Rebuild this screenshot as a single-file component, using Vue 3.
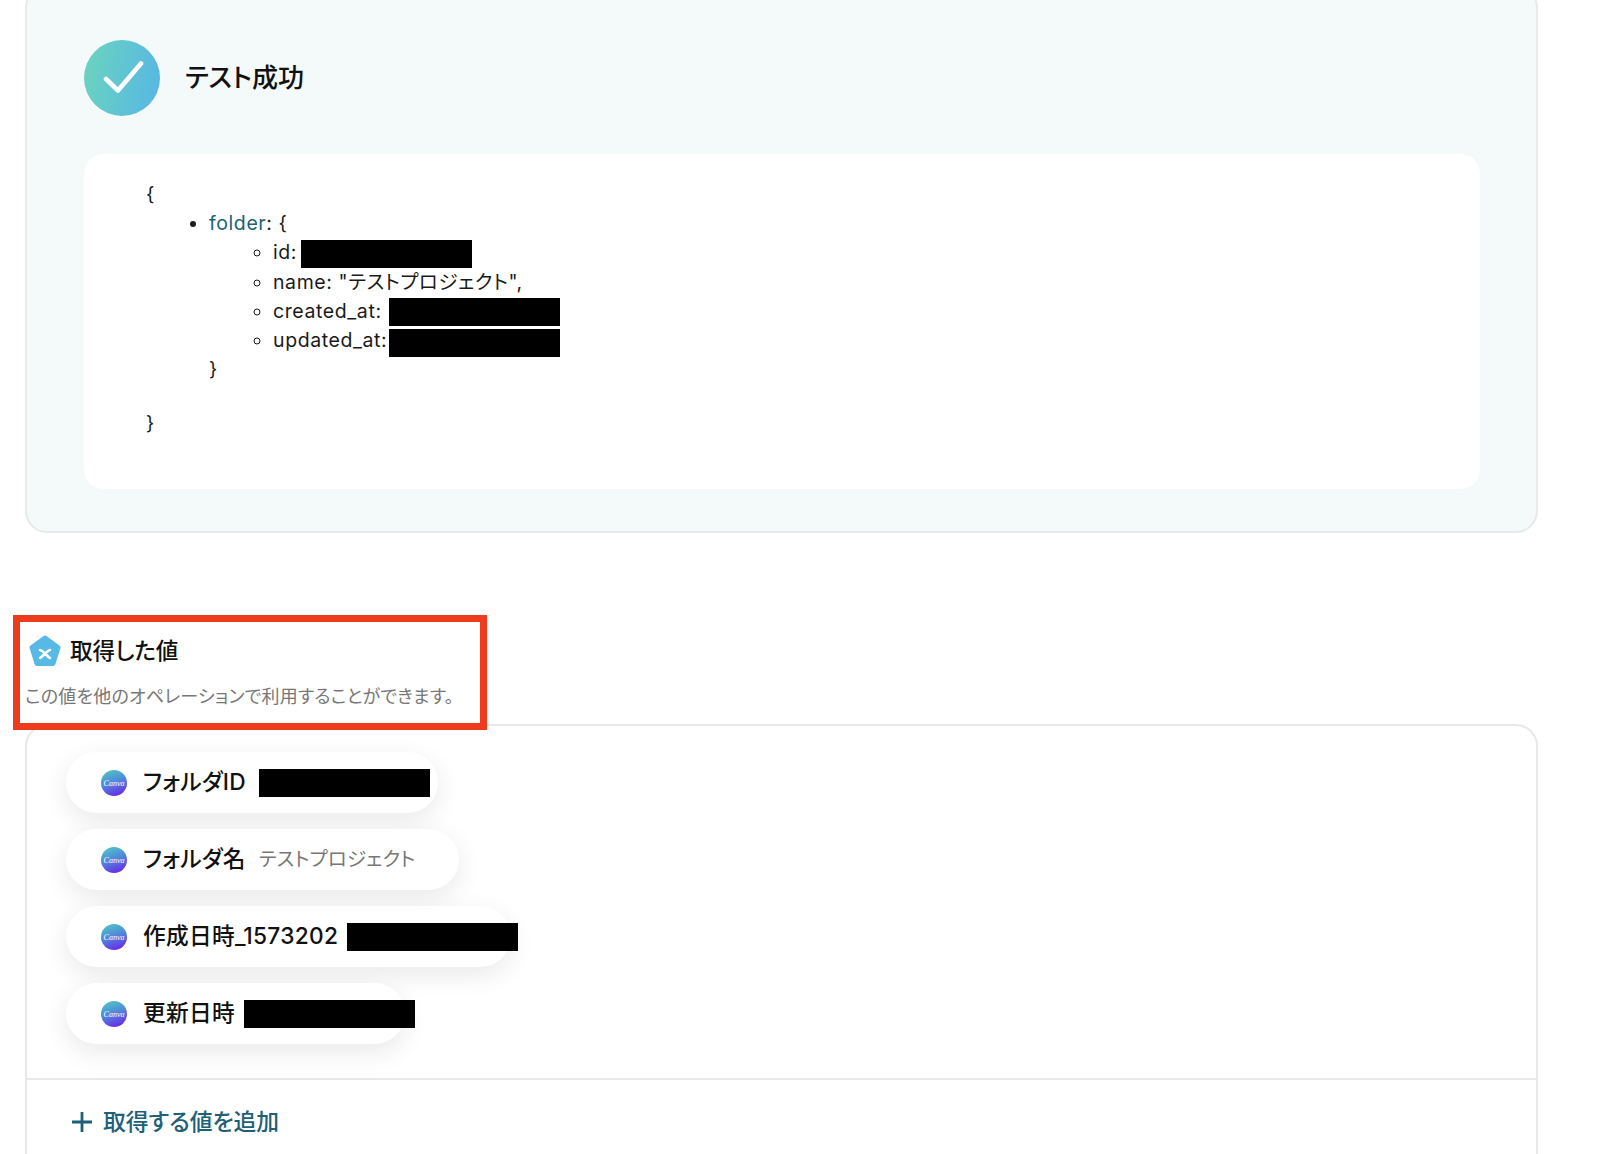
<script setup>
const pills = [
  { label: 'フォルダID', width: 372, gap: 13, mask: true },
  { label: 'フォルダ名', width: 393, gap: 13, value: 'テストプロジェクト' },
  { label: '作成日時_1573202', width: 445, gap: 9, mask: true },
  { label: '更新日時', width: 339, gap: 9, mask: true }
]
</script>

<template>
  <div class="page">
    <section class="result">
      <header class="result-head">
        <span class="check">
          <svg width="44" height="44" viewBox="0 0 44 44" fill="none">
            <path d="M6 23 L18 34.5 L41 7.5" stroke="#fff" stroke-width="4.6" stroke-linecap="round" stroke-linejoin="round" />
          </svg>
        </span>
        <h2 class="result-title">テスト成功</h2>
      </header>
      <div class="json">
        <div>{</div>
        <ul class="outer">
          <li>
            <span class="key">folder</span>: {
            <ul class="inner">
              <li>id: <span class="mask mask-id"></span></li>
              <li>name: "テストプロジェクト",</li>
              <li>created_at: "<span class="mask mask-created"></span></li>
              <li>updated_at: <span class="mask mask-updated"></span></li>
            </ul>
            <div>}</div>
          </li>
        </ul>
        <div class="close">}</div>
      </div>
    </section>

    <section class="values">
      <div class="values-head">
        <div class="values-title-row">
          <svg class="penta" width="32" height="32" viewBox="0 0 32 32">
            <polygon points="16,3 29,12.5 24,28.5 8,28.5 3,12.5" fill="#56b9e6" stroke="#56b9e6" stroke-width="5" stroke-linejoin="round" />
            <path d="M11 15 C14 15.5 18 21.5 21 23 M21 15 C18 15.5 14 21.5 11 23" fill="none" stroke="#fff" stroke-width="2.6" stroke-linecap="round" />
          </svg>
          <h3 class="values-title">取得した値</h3>
        </div>
        <p class="values-desc">この値を他のオペレーションで利用することができます。</p>
      </div>

      <div class="values-card">
        <div class="pill-list">
          <div v-for="pill in pills" :key="pill.label" class="pill" :style="{ width: pill.width + 'px' }">
            <svg class="canva" width="26" height="26" viewBox="0 0 26 26">
              <defs>
                <linearGradient :id="'cv' + pill.width" x1="0.25" y1="0" x2="0.6" y2="1">
                  <stop offset="0" stop-color="#50c4c4" />
                  <stop offset="0.5" stop-color="#4f86dc" />
                  <stop offset="1" stop-color="#6a2be8" />
                </linearGradient>
              </defs>
              <circle cx="13" cy="13" r="13" :fill="'url(#cv' + pill.width + ')'" />
              <text x="13" y="16" text-anchor="middle" class="canva-text">Canva</text>
            </svg>
            <span class="pill-label">{{ pill.label }}</span>
            <span v-if="pill.value" class="pill-value" :style="{ marginLeft: pill.gap + 'px' }">{{ pill.value }}</span>
            <span v-if="pill.mask" class="pill-mask" :style="{ marginLeft: pill.gap + 'px' }"></span>
          </div>
        </div>
        <div class="add-row">
          <svg width="22" height="22" viewBox="0 0 22 22">
            <path d="M11 1 V21 M1 11 H21" stroke="#1d6078" stroke-width="2.8" fill="none" />
          </svg>
          <span class="add-label">取得する値を追加</span>
        </div>
      </div>
    </section>
  </div>
</template>

<style>
html, body { margin: 0; background: #fff; }
</style>

<style scoped>
.page {
  height: 1154px;
  overflow: hidden;
  background: #fff;
  font-family: Inter, "Noto Sans CJK JP", sans-serif;
  font-feature-settings: "palt";
  color: #1a1a1a;
}
.result {
  box-sizing: border-box;
  width: 1513px;
  height: 547px;
  margin: -14px 0 0 25px;
  padding: 51px 56px 0 57px;
  background: #f4f9f9;
  border: 2px solid #e6eaea;
  border-radius: 22px;
}
.result-head {
  display: flex;
  align-items: center;
  gap: 25px;
  height: 77px;
}
.check {
  display: flex;
  align-items: center;
  justify-content: center;
  width: 76px;
  height: 76px;
  border-radius: 50%;
  background: linear-gradient(100deg, #6cd4bd, #56b6e6);
}
.result-title {
  margin: -4px 0 0;
  font-size: 26px;
  font-weight: 500;
  color: #111;
}
.json {
  box-sizing: border-box;
  height: 335px;
  margin-top: 38px;
  padding: 26px 62px;
  background: #fff;
  border-radius: 20px;
  font-size: 19.5px;
  line-height: 29.2px;
  letter-spacing: 0.6px;
}
.outer, .inner {
  margin: 0;
  padding-left: 63px;
}
.inner { padding-left: 64px; }
.key { color: #1d6078; }
.close { margin-top: 25px; }
.mask {
  display: inline-block;
  vertical-align: top;
  width: 171px;
  height: 28px;
  background: #000;
}
.mask-id { margin: 1.6px 0 -1.6px -2px; }
.mask-created { margin: 1.2px 0 -1.2px -8px; }
.mask-updated { margin: 3px 0 -3px -4px; }
.values { margin-top: 82px; }
.values-head {
  position: relative;
  z-index: 1;
  box-sizing: border-box;
  width: 474px;
  height: 115px;
  margin: 0 0 -6px 13px;
  padding: 13px 0 0 5px;
  border: 7px solid #ee3b1e;
  background: #fff;
}
.values-title-row {
  display: flex;
  align-items: center;
  gap: 9px;
  margin-left: 4px;
}
.values-title {
  margin: 0;
  font-size: 22.6px;
  font-weight: 500;
  line-height: 32px;
  color: #111;
}
.values-desc {
  margin: 18px 0 0;
  font-size: 18px;
  line-height: 24px;
  letter-spacing: 0.2px;
  color: #777;
  white-space: nowrap;
}
.values-card {
  box-sizing: border-box;
  width: 1513px;
  height: 460px;
  margin-left: 25px;
  border: 2px solid #e8e8e8;
  border-radius: 22px;
}
.pill-list {
  display: flex;
  flex-direction: column;
  gap: 16px;
  padding: 26px 0 34px 39px;
  border-bottom: 2px solid #e8e8e8;
}
.pill {
  box-sizing: border-box;
  display: flex;
  align-items: center;
  height: 61px;
  padding-left: 35px;
  background: #fff;
  border-radius: 31px;
  box-shadow: 0 8px 26px rgba(0, 0, 0, 0.09);
  white-space: nowrap;
}
.canva { flex: none; margin-right: 16px; }
.canva-text {
  font-family: "Liberation Serif", serif;
  font-style: italic;
  font-size: 8px;
  fill: #fff;
}
.pill-label {
  margin-top: -4px;
  font-size: 22.7px;
  font-weight: 500;
  letter-spacing: 0.3px;
  color: #111;
}
.pill-value {
  margin-top: -4px;
  font-size: 19.5px;
  letter-spacing: 0.2px;
  color: #777;
}
.pill-mask {
  flex: none;
  width: 171px;
  height: 28px;
  background: #000;
}
.add-row {
  display: flex;
  align-items: center;
  gap: 10px;
  padding: 26px 0 0 44px;
}
.add-label {
  font-size: 22.8px;
  font-weight: 500;
  line-height: 32px;
  color: #1d6078;
}
</style>
